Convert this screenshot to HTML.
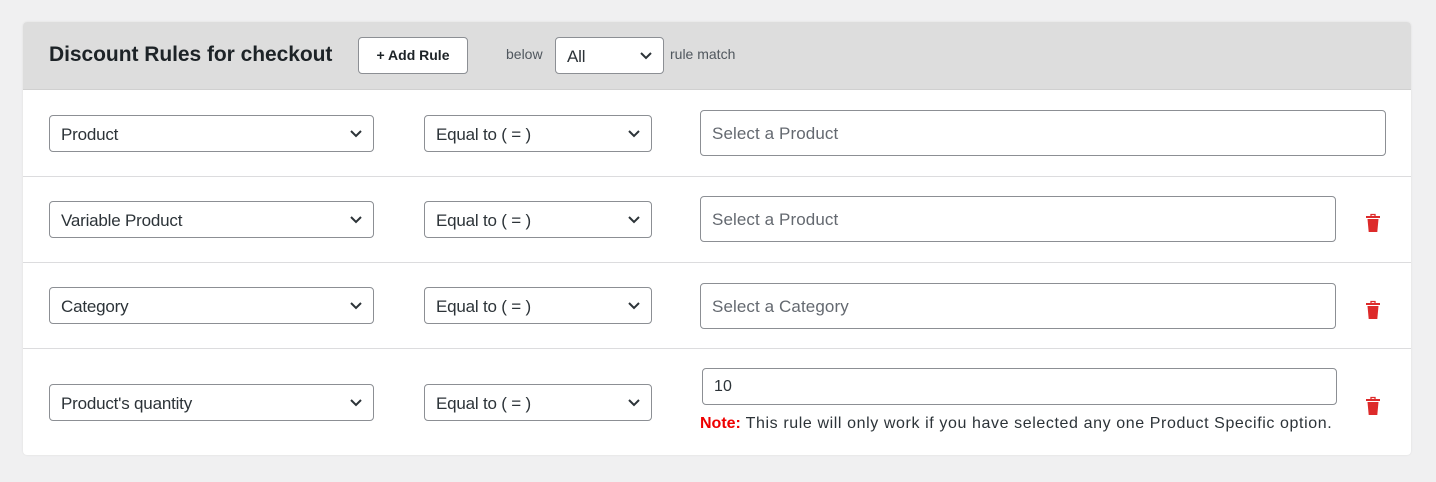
<!DOCTYPE html><html><head><style>
body{margin:0;width:1436px;height:482px;background:#f0f0f1;font-family:"Liberation Sans",sans-serif;position:relative;overflow:hidden}
.a{position:absolute;box-sizing:border-box}
.card{left:23px;top:22px;width:1388px;height:433px;background:#fff;border-radius:4px;overflow:hidden;box-shadow:0 0 2px rgba(0,0,0,.08)}
.hd{left:0;top:0;width:1388px;height:68px;background:#dddddd;border-bottom:1px solid #d0d0d0}
.sel{border:1px solid #8c8f94;border-radius:4px;background:#fff;height:37px;font-size:17px;color:#2c3338;padding:9px 11px 0;letter-spacing:-.2px}
.sel svg{position:absolute;right:11px;top:14px}
.inp{border:1px solid #8c8f94;border-radius:4px;background:#fff;height:46px;font-size:17px;color:#646970;padding:13px 11px 0;letter-spacing:.1px}
.line{left:0;width:1388px;height:1px;background:#dcdcde}
.tr{width:16px;height:20px}
</style></head><body>
<div class="a card">
<div class="a hd"></div>
<div class="a" style="left:26px;top:21px;font-size:21px;font-weight:bold;color:#1d2327;letter-spacing:0"><span style="letter-spacing:-.05px">Discount Rules for checkout</span></div>
<div class="a" style="left:335px;top:15px;width:110px;height:37px;border:1px solid #8c8f94;border-radius:4px;background:#fff;font-size:14px;font-weight:bold;color:#1d2327;text-align:center;line-height:35px">+ Add Rule</div>
<div class="a" style="left:483px;top:24px;font-size:14px;color:#50575e">below</div>
<div class="a sel" style="left:532px;top:15px;width:109px">All<svg width="12" height="8"><path d="M1 1l5 5 5-5" stroke="#2c3338" stroke-width="2" fill="none"/></svg></div>
<div class="a" style="left:647px;top:24px;font-size:14px;color:#50575e">rule match</div>
<div class="a line" style="top:154px"></div>
<div class="a line" style="top:240px"></div>
<div class="a line" style="top:326px"></div>
</div>

<div class="a sel" style="left:49px;top:115px;width:325px">Product<svg width="12" height="8"><path d="M1 1l5 5 5-5" stroke="#2c3338" stroke-width="2" fill="none"/></svg></div>
<div class="a sel" style="left:424px;top:115px;width:228px">Equal to ( = )<svg width="12" height="8"><path d="M1 1l5 5 5-5" stroke="#2c3338" stroke-width="2" fill="none"/></svg></div>
<div class="a inp" style="left:700px;top:110px;width:686px">Select a Product</div>

<div class="a sel" style="left:49px;top:201px;width:325px">Variable Product<svg width="12" height="8"><path d="M1 1l5 5 5-5" stroke="#2c3338" stroke-width="2" fill="none"/></svg></div>
<div class="a sel" style="left:424px;top:201px;width:228px">Equal to ( = )<svg width="12" height="8"><path d="M1 1l5 5 5-5" stroke="#2c3338" stroke-width="2" fill="none"/></svg></div>
<div class="a inp" style="left:700px;top:196px;width:636px">Select a Product</div>

<div class="a sel" style="left:49px;top:287px;width:325px">Category<svg width="12" height="8"><path d="M1 1l5 5 5-5" stroke="#2c3338" stroke-width="2" fill="none"/></svg></div>
<div class="a sel" style="left:424px;top:287px;width:228px">Equal to ( = )<svg width="12" height="8"><path d="M1 1l5 5 5-5" stroke="#2c3338" stroke-width="2" fill="none"/></svg></div>
<div class="a inp" style="left:700px;top:283px;width:636px">Select a Category</div>

<div class="a sel" style="left:49px;top:384px;width:325px">Product's quantity<svg width="12" height="8"><path d="M1 1l5 5 5-5" stroke="#2c3338" stroke-width="2" fill="none"/></svg></div>
<div class="a sel" style="left:424px;top:384px;width:228px">Equal to ( = )<svg width="12" height="8"><path d="M1 1l5 5 5-5" stroke="#2c3338" stroke-width="2" fill="none"/></svg></div>
<div class="a inp" style="left:702px;top:368px;width:635px;height:37px;padding:9px 11px 0;color:#2c3338;font-size:16px">10</div>
<div class="a" style="left:700px;top:415px;font-size:16px;color:#2c3338;letter-spacing:.6px;white-space:nowrap"><b style="color:#e00;letter-spacing:0">Note:</b> This rule will only work if you have selected any one Product Specific option.</div>

<svg class="a tr" style="left:1365px;top:213px" viewBox="0 0 16 20"><rect x="1" y="3" width="14" height="2" fill="#dd2a2a"/><path d="M6 3V1.5h4V3" stroke="#dd2a2a" stroke-width="1.3" fill="none"/><path d="M2.5 6h11l-1.2 13H3.7z" fill="#dd2a2a"/></svg>
<svg class="a tr" style="left:1365px;top:300px" viewBox="0 0 16 20"><rect x="1" y="3" width="14" height="2" fill="#dd2a2a"/><path d="M6 3V1.5h4V3" stroke="#dd2a2a" stroke-width="1.3" fill="none"/><path d="M2.5 6h11l-1.2 13H3.7z" fill="#dd2a2a"/></svg>
<svg class="a tr" style="left:1365px;top:396px" viewBox="0 0 16 20"><rect x="1" y="3" width="14" height="2" fill="#dd2a2a"/><path d="M6 3V1.5h4V3" stroke="#dd2a2a" stroke-width="1.3" fill="none"/><path d="M2.5 6h11l-1.2 13H3.7z" fill="#dd2a2a"/></svg>
</body></html>
